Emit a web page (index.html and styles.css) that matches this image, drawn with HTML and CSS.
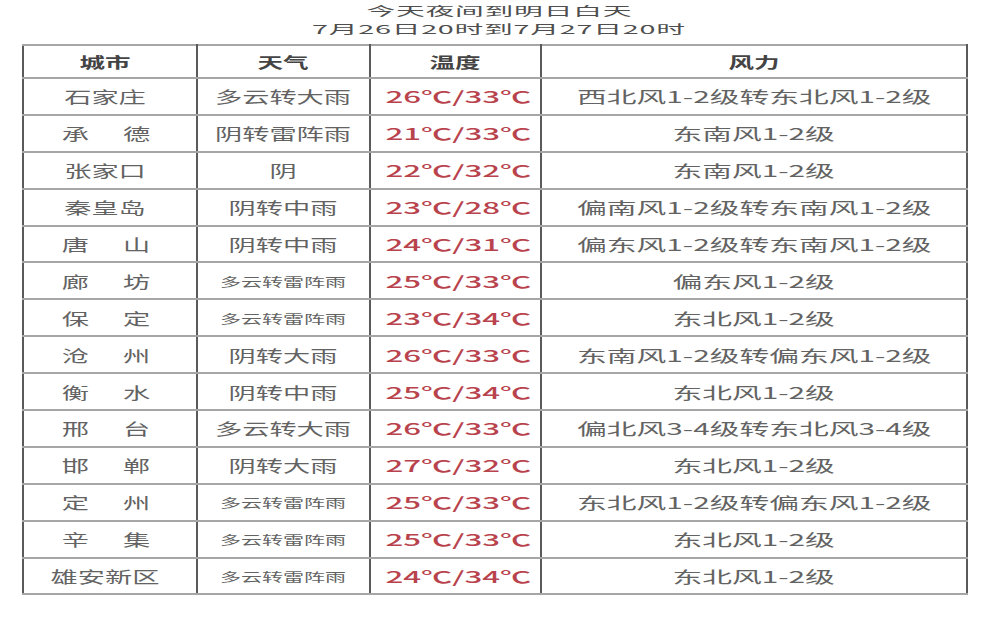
FILE: index.html
```html
<!DOCTYPE html>
<html lang="zh">
<head>
<meta charset="utf-8">
<title>天气预报</title>
<link rel="stylesheet" href="styles.css">
</head>
<body>
<div class="page">
  <div class="title">
    <div class="tl"><span class="sx tx">今天夜间到明日白天</span></div>
    <div class="tl"><span class="sx tx">7月26日20时到7月27日20时</span></div>
  </div>
  <table class="wx">
    <colgroup>
      <col class="c-city"><col class="c-wea"><col class="c-tmp"><col class="c-wind">
    </colgroup>
    <thead>
      <tr><th class="city"><span class="sx">城市</span></th><th><span class="sx">天气</span></th><th><span class="sx">温度</span></th><th><span class="sx">风力</span></th></tr>
    </thead>
    <tbody>
      <tr><td class="city"><span class="sx">石家庄</span></td><td><span class="sx">多云转大雨</span></td><td class="tmp"><span class="sx">26℃/33℃</span></td><td class="wind"><span class="sx">西北风1-2级转东北风1-2级</span></td></tr>
      <tr><td class="city"><span class="sx c2"><i>承</i><i>德</i></span></td><td><span class="sx">阴转雷阵雨</span></td><td class="tmp"><span class="sx">21℃/33℃</span></td><td class="wind"><span class="sx">东南风1-2级</span></td></tr>
      <tr><td class="city"><span class="sx">张家口</span></td><td><span class="sx">阴</span></td><td class="tmp"><span class="sx">22℃/32℃</span></td><td class="wind"><span class="sx">东南风1-2级</span></td></tr>
      <tr><td class="city"><span class="sx">秦皇岛</span></td><td><span class="sx">阴转中雨</span></td><td class="tmp"><span class="sx">23℃/28℃</span></td><td class="wind"><span class="sx">偏南风1-2级转东南风1-2级</span></td></tr>
      <tr><td class="city"><span class="sx c2"><i>唐</i><i>山</i></span></td><td><span class="sx">阴转中雨</span></td><td class="tmp"><span class="sx">24℃/31℃</span></td><td class="wind"><span class="sx">偏东风1-2级转东南风1-2级</span></td></tr>
      <tr><td class="city"><span class="sx c2"><i>廊</i><i>坊</i></span></td><td><span class="sx sm">多云转雷阵雨</span></td><td class="tmp"><span class="sx">25℃/33℃</span></td><td class="wind"><span class="sx">偏东风1-2级</span></td></tr>
      <tr><td class="city"><span class="sx c2"><i>保</i><i>定</i></span></td><td><span class="sx sm">多云转雷阵雨</span></td><td class="tmp"><span class="sx">23℃/34℃</span></td><td class="wind"><span class="sx">东北风1-2级</span></td></tr>
      <tr><td class="city"><span class="sx c2"><i>沧</i><i>州</i></span></td><td><span class="sx">阴转大雨</span></td><td class="tmp"><span class="sx">26℃/33℃</span></td><td class="wind"><span class="sx">东南风1-2级转偏东风1-2级</span></td></tr>
      <tr><td class="city"><span class="sx c2"><i>衡</i><i>水</i></span></td><td><span class="sx">阴转中雨</span></td><td class="tmp"><span class="sx">25℃/34℃</span></td><td class="wind"><span class="sx">东北风1-2级</span></td></tr>
      <tr><td class="city"><span class="sx c2"><i>邢</i><i>台</i></span></td><td><span class="sx">多云转大雨</span></td><td class="tmp"><span class="sx">26℃/33℃</span></td><td class="wind"><span class="sx">偏北风3-4级转东北风3-4级</span></td></tr>
      <tr><td class="city"><span class="sx c2"><i>邯</i><i>郸</i></span></td><td><span class="sx">阴转大雨</span></td><td class="tmp"><span class="sx">27℃/32℃</span></td><td class="wind"><span class="sx">东北风1-2级</span></td></tr>
      <tr><td class="city"><span class="sx c2"><i>定</i><i>州</i></span></td><td><span class="sx sm">多云转雷阵雨</span></td><td class="tmp"><span class="sx">25℃/33℃</span></td><td class="wind"><span class="sx">东北风1-2级转偏东风1-2级</span></td></tr>
      <tr><td class="city"><span class="sx c2"><i>辛</i><i>集</i></span></td><td><span class="sx sm">多云转雷阵雨</span></td><td class="tmp"><span class="sx">25℃/33℃</span></td><td class="wind"><span class="sx">东北风1-2级</span></td></tr>
      <tr><td class="city"><span class="sx">雄安新区</span></td><td><span class="sx sm">多云转雷阵雨</span></td><td class="tmp"><span class="sx">24℃/34℃</span></td><td class="wind"><span class="sx">东北风1-2级</span></td></tr>
    </tbody>
  </table>
</div>
</body>
</html>
```

FILE: styles.css
```css
html, body {
  margin: 0;
  padding: 0;
  background: #ffffff;
}

body {
  width: 985px;
  height: 617px;
  overflow: hidden;
  font-family: "Noto Sans CJK SC", "Noto Sans", sans-serif;
  color: #636363;
}

.page {
  padding: 0 19px 0 22px;
}

.title {
  height: 44px;
  padding-top: 2px;
  box-sizing: border-box;
  text-align: center;
  color: #4e4e4e;
  padding-left: 10px;
}

.tl {
  height: 17.5px;
  line-height: 17.5px;
  font-size: 12px;
}

.sx {
  display: inline-block;
  transform: scaleX(1.7);
  white-space: nowrap;
}

.sx.tx {
  transform: scaleX(2.4);
  letter-spacing: 0.3px;
}

.wx {
  width: 944px;
  border-collapse: collapse;
  table-layout: fixed;
  border: 2px solid #8e8e8e;
}

.c-city { width: 174px; }
.c-wea { width: 173px; }
.c-tmp { width: 171px; }
.c-wind { width: 426px; }

.wx th,
.wx td {
  text-align: center;
  padding: 0;
  border-top: 2px solid #a6a6a6;
  border-bottom: 2px solid #a6a6a6;
  border-left: 2px solid #5a5a5a;
  border-right: 2px solid #5a5a5a;
  overflow: hidden;
}

.wx th {
  height: 31px;
  font-size: 15px;
  font-weight: 700;
  color: #444444;
}

.wx td {
  height: 34.9px;
  font-size: 16px;
  line-height: 20px;
}

.wx .city {
  padding-right: 9px;
}

.wx td.tmp {
  color: #b9434d;
  font-weight: 500;
  padding-left: 6px;
}

.wx td.tmp .sx {
  transform: scaleX(1.95);
}

.wx td.wind .sx {
  transform: scaleX(1.86);
}

.sm {
  font-size: 12px;
  transform: scaleX(1.75);
}

.c2 {
  display: inline-flex;
  justify-content: space-between;
  width: 52px;
}

.c2 i {
  font-style: normal;
}
```
